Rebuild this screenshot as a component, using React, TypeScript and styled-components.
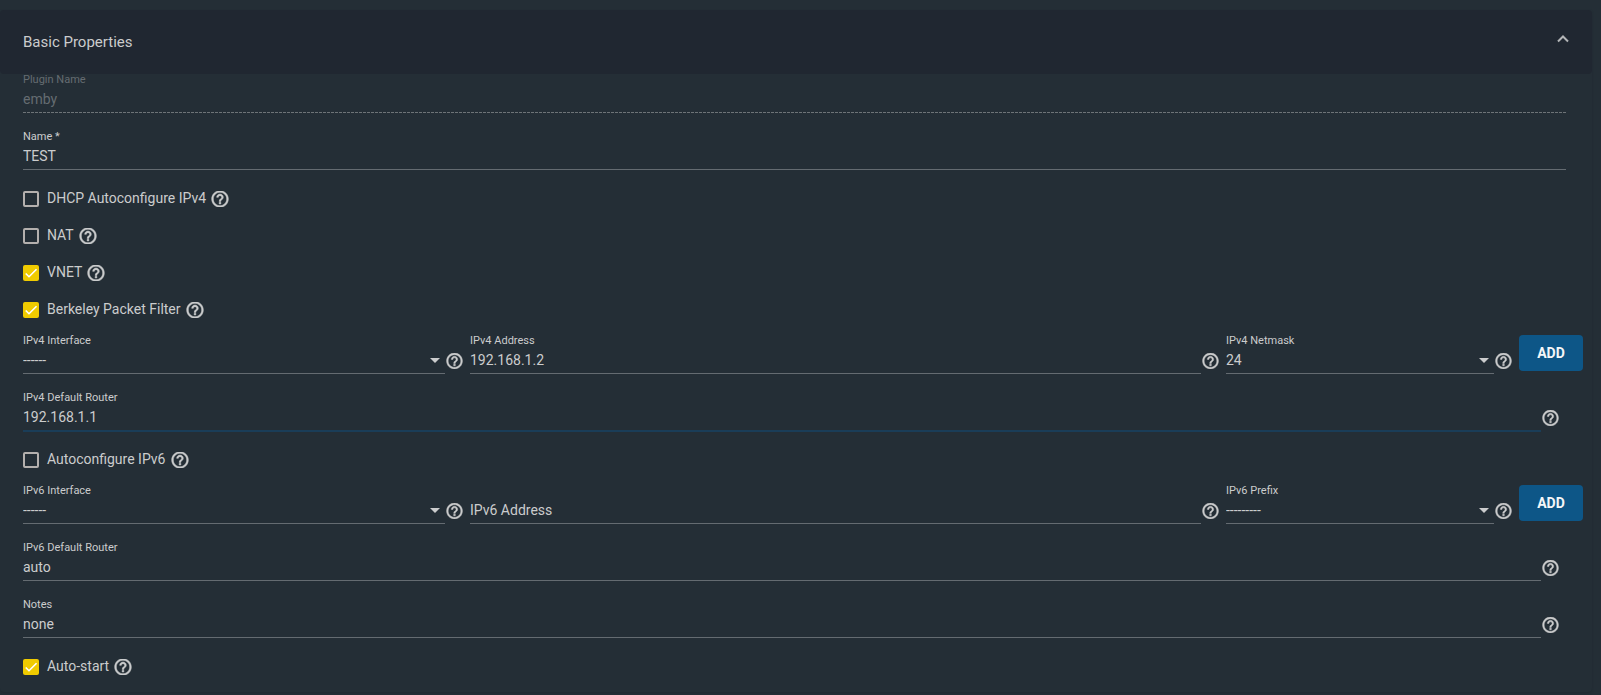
import React, { useId, useState } from "react";
import styled, { createGlobalStyle, css } from "styled-components";

const colors = {
  page: "#242e36",
  header: "#202731",
  edge: "#202931",
  text: "#cbcccd",
  line: "#646b71",
  primary: "#0d5687",
  accent: "#f0cb00",
};

const GlobalStyle = createGlobalStyle`
  *, *::before, *::after { box-sizing: border-box; }
  body {
    margin: 0;
    background: ${colors.page};
    color: ${colors.text};
    font: 14px/18px Roboto, "Liberation Sans", sans-serif;
  }
`;

const Page = styled.main`
  padding: 10px 9px 3px 0;
`;

const Card = styled.section`
  border-radius: 4px;
  box-shadow: 0 1px 2px ${colors.edge};
`;

const Header = styled.header`
  display: flex;
  align-items: center;
  justify-content: space-between;
  height: 64px;
  padding: 0 19px 0 23px;
  border-radius: 4px;
  background: ${colors.header};
`;

const Title = styled.h2`
  margin: 0;
  font-size: 15px;
  line-height: 18px;
  font-weight: 400;
`;

const Collapse = styled.button`
  display: flex;
  padding: 0 0 6px;
  border: 0;
  background: none;
  color: #b3b5b7;
`;

const Form = styled.form`
  padding: 0 9px 17px 23px;
`;

const Row = styled.div`
  display: flex;
  height: 57px;
  padding-right: 17px;
`;

const AddressRow = styled.div`
  display: grid;
  grid-template-columns: 447fr 756fr 293fr 64px;
  height: 57px;
`;

const Cell = styled.div<{ $help?: boolean }>`
  display: grid;
  flex: 1;
  grid-template-columns: minmax(0, 1fr) ${(p) => (p.$help ? "25px" : "")};
  align-items: start;
`;

const Field = styled.div<{ $disabled?: boolean; $focused?: boolean }>`
  position: relative;
  display: flex;
  flex-direction: column;
  gap: 4px;
  height: ${(p) => (p.$focused ? 40 : 39)}px;
  border-bottom: ${(p) => (p.$focused ? "2px solid #1a3d58" : `1px solid ${colors.line}`)};
  color: ${colors.text};
  ${(p) =>
    p.$disabled &&
    css`
      border-bottom: 0;
      color: #656c71;
      background: repeating-linear-gradient(to right, #6d7377 0 3px, transparent 3px 4px) left
        bottom / 100% 1px no-repeat;
    `}
`;

const Label = styled.label`
  font-size: 11px;
  line-height: 12px;
`;

const control = css`
  width: 100%;
  height: 18px;
  margin: 0;
  padding: 0;
  border: 0;
  outline: 0;
  background: none;
  color: inherit;
  font: inherit;
`;

const Input = styled.input`
  ${control}
  &::placeholder { color: inherit; opacity: 1; }
`;

const EmptyLabel = styled.div`
  height: 12px;
`;

const Select = styled.select`
  ${control}
  appearance: none;
  option { color: #222; }
`;

const Caret = styled.svg`
  position: absolute;
  right: 5px;
  bottom: 10px;
  width: 10px;
  height: 5px;
  pointer-events: none;
`;

const CheckGroup = styled.div`
  display: flex;
  flex-direction: column;
  gap: 18px;
  margin-bottom: 17px;
`;

const CheckRow = styled.div`
  display: flex;
  align-items: center;
  height: 19px;
  padding-top: 3px;
`;

const CheckLabel = styled.label`
  display: flex;
  align-items: center;
  height: 16px;
  gap: 8px;
  line-height: 16px;
  padding-right: 4px;
`;

const CheckText = styled.span`
  height: 18px;
`;

const CheckBox = styled.span`
  display: grid;
  width: 16px;
  height: 16px;
  svg { grid-area: 1 / 1; pointer-events: none; }
`;

const Tick = styled.input`
  grid-area: 1 / 1;
  appearance: none;
  width: 16px;
  height: 16px;
  margin: 0;
  border: 2px solid #b4b0ae;
  border-radius: 2px;
  &:checked { border: 0; background: ${colors.accent}; }
  & + svg { display: none; }
  &:checked + svg { display: block; }
`;

const HelpButton = styled.button<{ $field?: boolean }>`
  display: flex;
  justify-content: center;
  padding: 0;
  border: 0;
  background: none;
  color: inherit;
  margin: ${(p) => (p.$field ? "18px 6px 0 0" : "0")};
`;

const AddButton = styled.button`
  height: 36px;
  padding: 0 0 1px;
  border: 0;
  border-radius: 4px;
  background: ${colors.primary};
  color: #f4f6f8;
  font: 700 14px/18px Roboto, "Liberation Sans", sans-serif;
`;

function Help({ topic, field }: { topic: string; field?: boolean }) {
  return (
    <HelpButton type="button" aria-label={`Help: ${topic}`} $field={field}>
      <svg
        width="20"
        height="16"
        viewBox="0 2.4 24 19.2"
        fill="currentColor"
        stroke="currentColor"
        strokeWidth="0.6"
      >
        <path d="M11 18h2v-2h-2v2zm1-16C6.48 2 2 6.48 2 12s4.480 10 10 10 10-4.480 10-10S17.520 2 12 2zm0 18c-4.410 0-8-3.590-8-8s3.590-8 8-8 8 3.590 8 8-3.590 8-8 8zm0-14c-2.210 0-4 1.790-4 4h2c0-1.100.9-2 2-2s2 .9 2 2c0 2-3 1.750-3 5h2c0-2.250 3-2.500 3-5 0-2.210-1.790-4-4-4z" />
      </svg>
    </HelpButton>
  );
}

interface FieldProps {
  label: string;
  value?: string;
  help?: boolean;
  disabled?: boolean;
  focused?: boolean;
}

function TextField({ label, value = "", help, disabled, focused }: FieldProps) {
  const id = useId();
  return (
    <Cell $help={help}>
      <Field $disabled={disabled} $focused={focused}>
        {value ? <Label htmlFor={id}>{label}</Label> : <EmptyLabel />}
        <Input
          id={id}
          defaultValue={value}
          disabled={disabled}
          placeholder={value ? undefined : label}
          aria-label={value ? undefined : label}
        />
      </Field>
      {help && <Help topic={label} field />}
    </Cell>
  );
}

function SelectField({ label, value }: FieldProps) {
  const id = useId();
  return (
    <Cell $help>
      <Field>
        <Label htmlFor={id}>{label}</Label>
        <Select id={id} defaultValue={value}>
          <option>{value}</option>
        </Select>
        <Caret viewBox="0 0 10 5" fill="currentColor">
          <path d="M0 0h10L5 5z" />
        </Caret>
      </Field>
      <Help topic={label} field />
    </Cell>
  );
}

function CheckField({ label, checked = false }: { label: string; checked?: boolean }) {
  const [on, setOn] = useState(checked);
  return (
    <CheckRow>
      <CheckLabel>
        <CheckBox>
          <Tick type="checkbox" checked={on} onChange={() => setOn(!on)} />
          <svg width="16" height="16" viewBox="0 0 24 24" fill="none" stroke="#fff" strokeWidth="2.400">
            <path d="M4.100 12.700 9 17.600 20.300 6.300" />
          </svg>
        </CheckBox>
        <CheckText>{label}</CheckText>
      </CheckLabel>
      <Help topic={label} />
    </CheckRow>
  );
}

export default function App() {
  return (
    <Page>
      <GlobalStyle />
      <Card>
        <Header>
          <Title>Basic Properties</Title>
          <Collapse type="button" aria-label="Collapse">
            <svg width="20" height="20" viewBox="0 0 20 20" fill="none" stroke="currentColor" strokeWidth="2">
              <path d="M5 12.500 10 7.500l5 5" />
            </svg>
          </Collapse>
        </Header>
        <Form>
          <Row>
            <TextField label="Plugin Name" value="emby" disabled />
          </Row>
          <Row>
            <TextField label="Name *" value="TEST" />
          </Row>
          <CheckGroup>
            <CheckField label="DHCP Autoconfigure IPv4" />
            <CheckField label="NAT" />
            <CheckField label="VNET" checked />
            <CheckField label="Berkeley Packet Filter" checked />
          </CheckGroup>
          <AddressRow>
            <SelectField label="IPv4 Interface" value="------" />
            <TextField label="IPv4 Address" value="192.168.1.2" help />
            <SelectField label="IPv4 Netmask" value="24" />
            <AddButton type="button">ADD</AddButton>
          </AddressRow>
          <Row>
            <TextField label="IPv4 Default Router" value="192.168.1.1" help focused />
          </Row>
          <CheckGroup>
            <CheckField label="Autoconfigure IPv6" />
          </CheckGroup>
          <AddressRow>
            <SelectField label="IPv6 Interface" value="------" />
            <TextField label="IPv6 Address" help />
            <SelectField label="IPv6 Prefix" value="---------" />
            <AddButton type="button">ADD</AddButton>
          </AddressRow>
          <Row>
            <TextField label="IPv6 Default Router" value="auto" help />
          </Row>
          <Row>
            <TextField label="Notes" value="none" help />
          </Row>
          <CheckField label="Auto-start" checked />
        </Form>
      </Card>
    </Page>
  );
}
